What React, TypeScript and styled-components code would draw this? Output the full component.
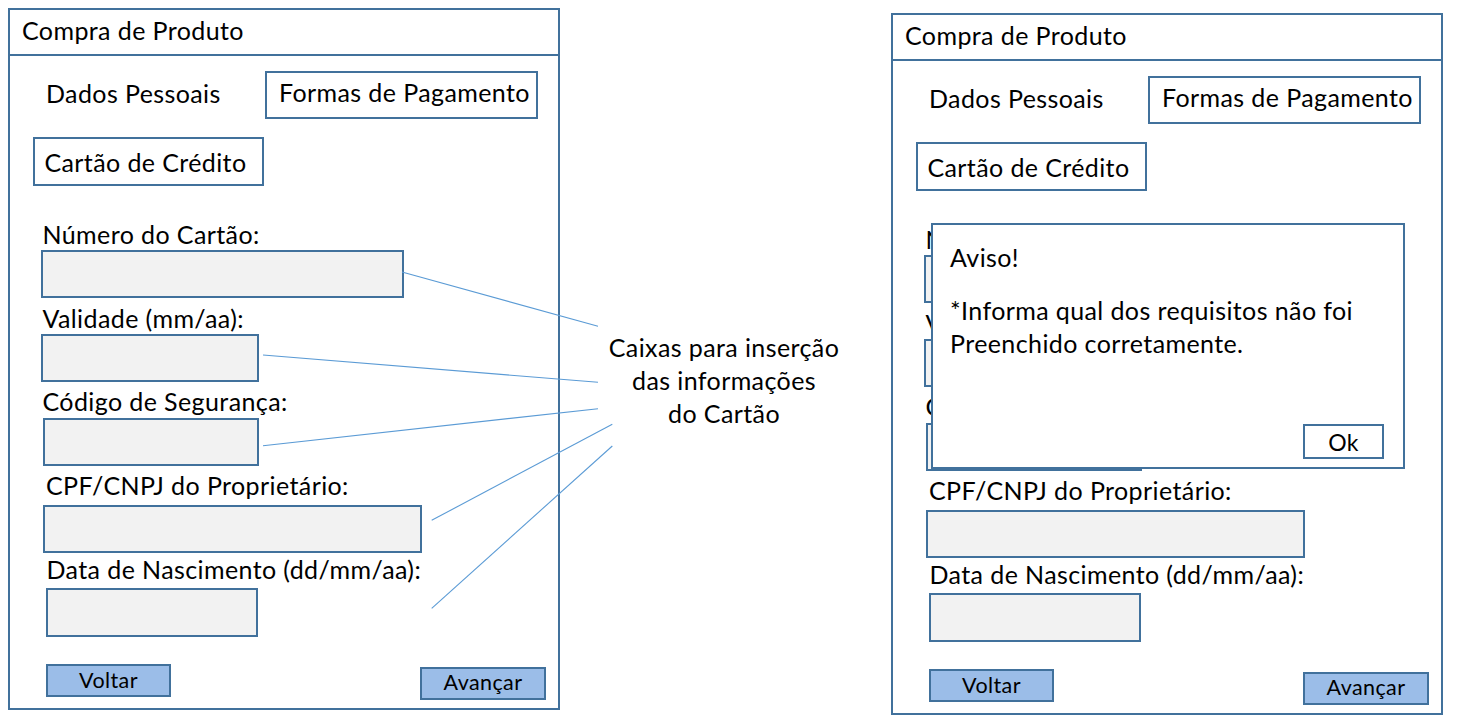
import React from "react";
import styled, { createGlobalStyle } from "styled-components";

const BLUE = "#41719c";
const LINE = "#5b9bd5";

const GlobalStyle = createGlobalStyle`
  html, body { margin: 0; padding: 0; background: #ffffff; }
  body { font-family: "Lato", "Noto Sans", sans-serif; color: #000; letter-spacing: 0.4px; }
  * { box-sizing: border-box; }
`;

const Canvas = styled.div`
  position: relative;
  width: 1459px;
  height: 727px;
  display: flex;
  align-items: flex-start;
  padding: 8px 0 0 8px;
  overflow: hidden;
`;

const Frame = styled.section<{ $top: number }>`
  position: relative;
  width: 552px;
  height: 702px;
  margin-top: ${(p) => p.$top}px;
  border: 2px solid ${BLUE};
  display: flex;
  flex-direction: column;
  flex-shrink: 0;
  background: #fff;
`;

const Header = styled.header`
  height: 46px;
  padding: 6px 0 0 12px;
  border-bottom: 2px solid ${BLUE};
  font-size: 25px;
  line-height: 29px;
`;

const TabRow = styled.div`
  display: grid;
  grid-template-columns: 219px 273px;
  margin-top: 15px;
  padding-left: 36px;
`;

const TabLabel = styled.div`
  padding-top: 8px;
  font-size: 25px;
  line-height: 29px;
  white-space: nowrap;
`;

const TabBox = styled.div<{ $w: number; $h: number; $pt: number; $pl: number; $ml?: number; $mt?: number }>`
  width: ${(p) => p.$w}px;
  height: ${(p) => p.$h}px;
  margin-left: ${(p) => p.$ml ?? 0}px;
  margin-top: ${(p) => p.$mt ?? 0}px;
  padding: ${(p) => p.$pt}px 0 0 ${(p) => p.$pl}px;
  border: 2px solid ${BLUE};
  font-size: 25px;
  line-height: 29px;
  white-space: nowrap;
`;

const FieldLabel = styled.div<{ $mt: number; $ml: number }>`
  margin: ${(p) => p.$mt}px 0 0 ${(p) => p.$ml}px;
  font-size: 25px;
  line-height: 29px;
  white-space: nowrap;
`;

const InputBox = styled.div<{ $mt: number; $ml: number; $w: number; $h: number }>`
  margin: ${(p) => p.$mt}px 0 0 ${(p) => p.$ml}px;
  width: ${(p) => p.$w}px;
  height: ${(p) => p.$h}px;
  background: #f2f2f2;
  border: 2px solid ${BLUE};
`;

const ButtonRow = styled.div`
  display: flex;
  justify-content: space-between;
  align-items: flex-start;
  margin-top: 27px;
  padding: 0 12px 0 36px;
`;

const NavButton = styled.div<{ $mt: number; $w: number; $pt: number }>`
  width: ${(p) => p.$w}px;
  height: 33px;
  margin-top: ${(p) => p.$mt}px;
  padding-top: ${(p) => p.$pt}px;
  background: #9bbde8;
  border: 2px solid ${BLUE};
  font-size: 21.5px;
  line-height: 25px;
  text-align: center;
  white-space: nowrap;
`;

const AnnotationColumn = styled.div`
  flex: 0 0 331px;
  margin-top: 323px;
  padding-right: 3px;
  font-size: 25px;
  line-height: 33px;
  text-align: center;
  white-space: nowrap;
`;

const Connectors = styled.svg`
  position: absolute;
  inset: 0;
  pointer-events: none;
`;

const Dialog = styled.div`
  position: absolute;
  left: 38px;
  top: 208px;
  width: 474px;
  height: 246px;
  background: #fff;
  border: 2px solid ${BLUE};
  display: flex;
  flex-direction: column;
  padding: 18px 0 0 17px;
`;

const DialogTitle = styled.div`
  font-size: 25px;
  line-height: 29px;
`;

const DialogText = styled.div`
  margin-top: 22px;
  font-size: 25px;
  line-height: 33px;
  white-space: nowrap;
`;

const OkButton = styled.div`
  align-self: flex-end;
  margin: auto 19px 8px 0;
  width: 81px;
  height: 35px;
  padding-top: 2px;
  border: 2px solid ${BLUE};
  background: #fff;
  font-size: 23px;
  line-height: 28px;
  text-align: center;
`;

type Field = { label: string; lmt: number; lml: number; imt: number; iml: number; w: number; h: number };

const fields: Field[] = [
  { label: "Número do Cartão:", lmt: 34, lml: 32.5, imt: 1, iml: 31, w: 363, h: 48 },
  { label: "Validade (mm/aa):", lmt: 6, lml: 32.5, imt: 1, iml: 31, w: 218, h: 48 },
  { label: "Código de Segurança:", lmt: 5, lml: 32.5, imt: 2, iml: 32.6, w: 216, h: 48 },
  { label: "CPF/CNPJ do Proprietário:", lmt: 5, lml: 36, imt: 5, iml: 32.6, w: 379, h: 48 },
  { label: "Data de Nascimento (dd/mm/aa):", lmt: 2, lml: 36.5, imt: 4, iml: 36.3, w: 212, h: 49 },
];

const PurchaseForm: React.FC<{ top: number; children?: React.ReactNode }> = ({ top, children }) => (
  <Frame $top={top}>
    <Header>Compra de Produto</Header>
    <TabRow>
      <TabLabel>Dados Pessoais</TabLabel>
      <TabBox $w={273} $h={48} $pt={5} $pl={12}>Formas de Pagamento</TabBox>
    </TabRow>
    <TabBox $w={231} $h={49} $pt={9} $pl={9.6} $ml={22.8} $mt={18}>
      Cartão de Crédito
    </TabBox>
    {fields.map((f) => (
      <React.Fragment key={f.label}>
        <FieldLabel $mt={f.lmt} $ml={f.lml}>{f.label}</FieldLabel>
        <InputBox $mt={f.imt} $ml={f.iml} $w={f.w} $h={f.h} />
      </React.Fragment>
    ))}
    <ButtonRow>
      <NavButton $mt={0} $w={125} $pt={2}>Voltar</NavButton>
      <NavButton $mt={3} $w={126} $pt={1}>Avançar</NavButton>
    </ButtonRow>
    {children}
  </Frame>
);

const connectorLines = [
  [402, 272, 598, 326.3],
  [263, 355, 598, 382.3],
  [263, 445.7, 598, 408.7],
  [431.7, 520.3, 612.3, 424.3],
  [431.7, 608.3, 612.3, 446],
];

export default function App() {
  return (
    <>
      <GlobalStyle />
      <Canvas>
        <PurchaseForm top={0} />
        <AnnotationColumn>
          Caixas para inserção
          <br />
          das informações
          <br />
          do Cartão
        </AnnotationColumn>
        <PurchaseForm top={5}>
          <Dialog>
            <DialogTitle>Aviso!</DialogTitle>
            <DialogText>
              *Informa qual dos requisitos não foi
              <br />
              Preenchido corretamente.
            </DialogText>
            <OkButton>Ok</OkButton>
          </Dialog>
        </PurchaseForm>
        <Connectors width="1459" height="727" viewBox="0 0 1459 727">
          {connectorLines.map(([x1, y1, x2, y2], i) => (
            <line key={i} x1={x1} y1={y1} x2={x2} y2={y2} stroke={LINE} strokeWidth={1.1} />
          ))}
        </Connectors>
      </Canvas>
    </>
  );
}
